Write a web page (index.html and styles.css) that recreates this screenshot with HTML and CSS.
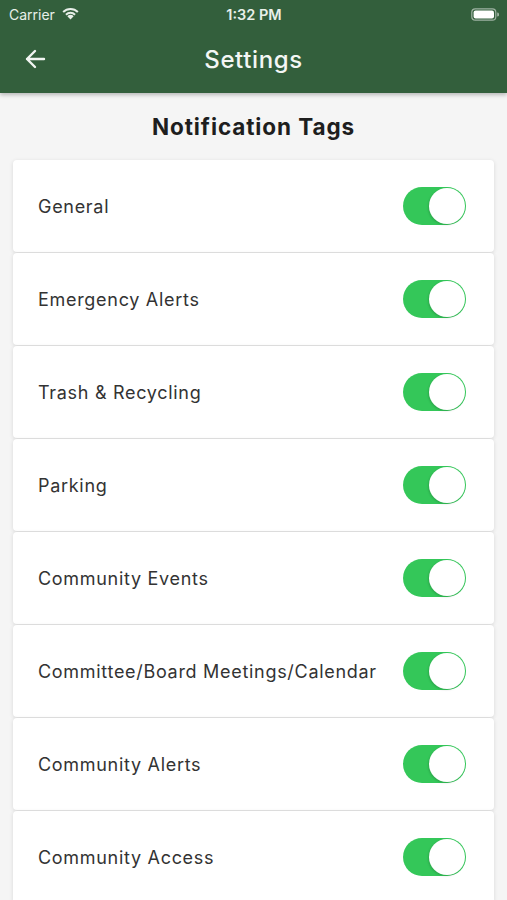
FILE: index.html
```html
<!DOCTYPE html>
<html>
<head>
<meta charset="utf-8">
<link rel="stylesheet" href="styles.css">
</head>
<body>
<div class="app">
  <header class="header">
    <div class="status">
      <div class="status-left">
        <span class="carrier">Carrier</span>
        <svg class="wifi" width="19" height="14" viewBox="0 0 16 12">
          <path d="M8 11.6 L5.3 8.7 A3.8 3.8 0 0 1 10.7 8.7 Z" fill="#e8efe9"/>
          <path d="M3.5 6.9 A6.3 6.3 0 0 1 12.5 6.9 L11.3 8.1 A4.6 4.6 0 0 0 4.7 8.1 Z" fill="#e8efe9"/>
          <path d="M1.1 4.6 A9.6 9.6 0 0 1 14.9 4.6 L13.7 5.8 A7.9 7.9 0 0 0 2.3 5.8 Z" fill="#e8efe9"/>
        </svg>
      </div>
      <div class="time">1:32 PM</div>
      <div class="status-right">
        <svg width="28" height="13" viewBox="0 0 28 13">
          <rect x="0.8" y="0.8" width="24" height="11.4" rx="3.5" fill="none" stroke="#9fb3a3" stroke-width="1.2"/>
          <rect x="2.6" y="2.6" width="20.4" height="7.8" rx="2" fill="#ffffff"/>
          <path d="M26.2 4.5 a2 2 0 0 1 0 4 Z" fill="#9fb3a3"/>
        </svg>
      </div>
    </div>
    <div class="navbar">
      <svg class="back" width="22" height="22" viewBox="0 0 22 22">
        <path d="M20 11 H3 M11 3 L3 11 L11 19" fill="none" stroke="#f2f5f2" stroke-width="2.4" stroke-linecap="round" stroke-linejoin="round"/>
      </svg>
      <div class="nav-title">Settings</div>
    </div>
  </header>
  <main class="content">
    <h1 class="section-title">Notification Tags</h1>
    <div class="list">
      <div class="card"><span class="label">General</span><span class="toggle"><span class="knob"></span></span></div>
      <div class="card"><span class="label">Emergency Alerts</span><span class="toggle"><span class="knob"></span></span></div>
      <div class="card"><span class="label">Trash &amp; Recycling</span><span class="toggle"><span class="knob"></span></span></div>
      <div class="card"><span class="label">Parking</span><span class="toggle"><span class="knob"></span></span></div>
      <div class="card"><span class="label">Community Events</span><span class="toggle"><span class="knob"></span></span></div>
      <div class="card"><span class="label">Committee/Board Meetings/Calendar</span><span class="toggle"><span class="knob"></span></span></div>
      <div class="card"><span class="label">Community Alerts</span><span class="toggle"><span class="knob"></span></span></div>
      <div class="card"><span class="label">Community Access</span><span class="toggle"><span class="knob"></span></span></div>
    </div>
  </main>
</div>
</body>
</html>
```

FILE: styles.css
```css
* { box-sizing: border-box; }
html, body { margin: 0; padding: 0; }
body {
  width: 507px;
  height: 900px;
  overflow: hidden;
  background: #f5f5f5;
  font-family: Inter, "Noto Sans", "Liberation Sans", sans-serif;
}
.app { display: flex; flex-direction: column; }
.header {
  background: #335f3c;
  height: 93px;
  box-shadow: 0 2px 4px rgba(0,0,0,0.25);
  position: relative;
  z-index: 2;
}
.status {
  height: 28px;
  display: flex;
  align-items: center;
  justify-content: space-between;
  padding: 0 8px 0 9px;
  color: #e8efe9;
}
.status-left { display: flex; align-items: center; gap: 6px; width: 120px; }
.carrier { font-size: 14px; }
.wifi { margin-top: -3px; }
.time { font-size: 14.5px; font-weight: 600; }
.status-right { width: 120px; display: flex; justify-content: flex-end; }
.navbar {
  height: 65px;
  display: flex;
  align-items: center;
  justify-content: center;
  position: relative;
  padding-bottom: 2px;
}
.back { position: absolute; left: 24px; top: 20px; }
.nav-title {
  color: #f4f6f4;
  font-size: 24px;
  font-weight: 500;
  letter-spacing: 0.6px;
}
.content { padding: 0 13px; }
.section-title {
  margin: 0;
  text-align: center;
  font-size: 22.5px;
  font-weight: 700;
  color: #1e1e1e;
  height: 67px;
  line-height: 68px;
  letter-spacing: 0.9px;
}
.list { display: flex; flex-direction: column; gap: 1px; }
.card {
  height: 92px;
  background: #ffffff;
  border-radius: 4px;
  box-shadow: 0 1px 4px rgba(0,0,0,0.12);
  display: flex;
  align-items: center;
  justify-content: space-between;
  padding: 0 28px 0 25px;
}
.label {
  font-size: 18px;
  color: #333333;
  letter-spacing: 0.7px;
}
.toggle {
  width: 63px;
  height: 38px;
  border-radius: 19px;
  background: #34c759;
  display: flex;
  justify-content: flex-end;
  align-items: center;
  padding: 1px;
}
.knob {
  width: 36px;
  height: 36px;
  border-radius: 50%;
  background: #ffffff;
  box-shadow: -1px 1px 2px rgba(0,0,0,0.15);
}
```
